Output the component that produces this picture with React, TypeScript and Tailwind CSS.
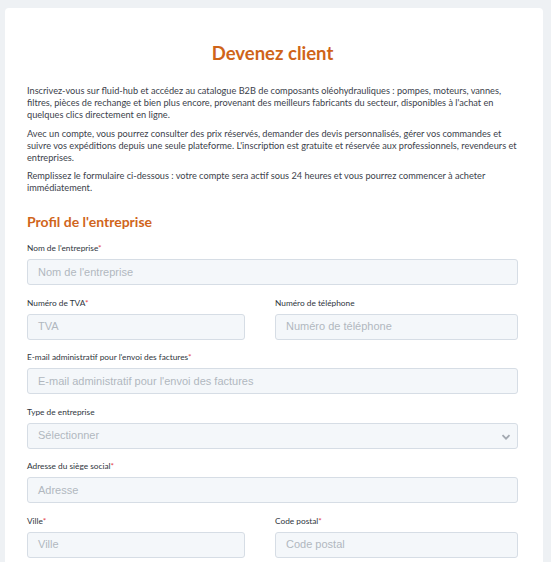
import React from 'react';

type Field = {
  label: string;
  placeholder: string;
  required?: boolean;
  select?: boolean;
};

const rows: Field[][] = [
  [{ label: "Nom de l'entreprise", placeholder: "Nom de l'entreprise", required: true }],
  [
    { label: 'Numéro de TVA', placeholder: 'TVA', required: true },
    { label: 'Numéro de téléphone', placeholder: 'Numéro de téléphone' },
  ],
  [
    {
      label: "E-mail administratif pour l'envoi des factures",
      placeholder: "E-mail administratif pour l'envoi des factures",
      required: true,
    },
  ],
  [{ label: "Type de entreprise", placeholder: 'Sélectionner', select: true }],
  [{ label: 'Adresse du siège social', placeholder: 'Adresse', required: true }],
  [
    { label: 'Ville', placeholder: 'Ville', required: true },
    { label: 'Code postal', placeholder: 'Code postal', required: true },
  ],
];

const FieldBox: React.FC<{ field: Field }> = ({ field }) => (
  <div className="flex flex-col">
    <label className="mb-[5px] text-[8.3px] leading-[12px] text-[#2f3640]">
      {field.label}
      {field.required && <span className="text-[#e5484d]">*</span>}
    </label>
    <div className="relative flex h-[26px] items-center rounded-[3px] border border-[#d6dde5] bg-[#f4f7fa] pl-[10px] font-['Liberation_Sans',sans-serif] text-[11px] text-[#b1b7bf]">
      {field.placeholder}
      {field.select && (
        <svg
          className="absolute right-[6px] top-[8px]"
          width="10"
          height="10"
          viewBox="0 0 10 10"
          fill="none"
          stroke="#a3a9b1"
          strokeWidth="1.8"
        >
          <path d="M1.5 3.2 5 6.7 8.5 3.2" />
        </svg>
      )}
    </div>
  </div>
);

const App: React.FC = () => {
  return (
    <div className="min-h-[562px] bg-[#eef1f4] pt-[8px] font-['Lato',sans-serif]">
      <div className="ml-[5px] w-[538px] rounded-t-[4px] bg-white pb-[20px] pl-[22px] pr-[25px] pt-[33px]">
        <h1 className="text-center text-[18.5px] font-bold leading-[24px] text-[#cf6419]">Devenez client</h1>

        <div className="mt-[20px] text-[9.2px] leading-[12px] text-[#3c424b]">
          <p className="mb-[7px]">
            Inscrivez-vous sur fluid-hub et accédez au catalogue B2B de composants oléohydrauliques : pompes, moteurs,
            vannes, filtres, pièces de rechange et bien plus encore, provenant des meilleurs fabricants du secteur,
            disponibles à l'achat en quelques clics directement en ligne.
          </p>
          <p className="mb-[6px]">
            Avec un compte, vous pourrez consulter des prix réservés, demander des devis personnalisés, gérer vos
            commandes et suivre vos expéditions depuis une seule plateforme. L'inscription est gratuite et réservée aux
            professionnels, revendeurs et entreprises.
          </p>
          <p>
            Remplissez le formulaire ci-dessous : votre compte sera actif sous 24 heures et vous pourrez commencer à
            acheter immédiatement.
          </p>
        </div>

        <h2 className="mt-[18px] text-[14px] font-bold leading-[20px] text-[#d0651b]">Profil de l'entreprise</h2>

        <div className="mt-[10px] flex flex-col gap-[11.5px]">
          {rows.map((row, i) =>
            row.length === 1 ? (
              <FieldBox key={i} field={row[0]} />
            ) : (
              <div key={i} className="grid grid-cols-[218px_1fr] gap-[30px]">
                {row.map(f => (
                  <FieldBox key={f.label} field={f} />
                ))}
              </div>
            )
          )}
        </div>
      </div>
    </div>
  );
};

export default App;
